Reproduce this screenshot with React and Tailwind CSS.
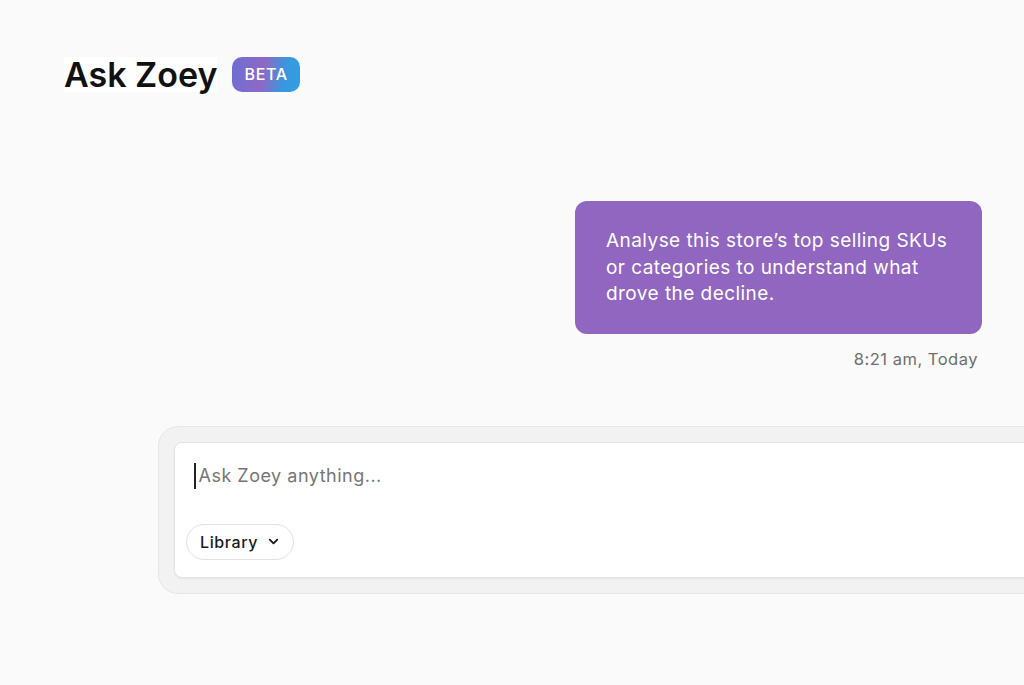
import React from 'react';

export default function App() {
    return (
        <div className="min-h-[685px] w-[1024px] overflow-hidden bg-[#fafafa] font-['Inter',sans-serif]">
            {/* Header */}
            <div className="flex items-center gap-[15px] pl-[64px] pt-[57px]">
                <h1 className="bg-white text-[34px] leading-[35px] font-semibold text-[#111]">Ask Zoey</h1>
                <span className="rounded-[10px] bg-[linear-gradient(100deg,#6c6fd2_0%,#8f68c6_45%,#3a97dd_75%,#2ea0e2_100%)] px-[12px] py-[7px] text-[16px] leading-[21px] font-medium tracking-[0.7px] text-white">
                    BETA
                </span>
            </div>

            {/* Mensaje del usuario */}
            <div className="mt-[109px] flex flex-col items-end pr-[42px]">
                <div className="w-[407px] rounded-[12px] bg-[#9166c0] px-[31px] pt-[27px] pb-[26px] text-[19px] leading-[26.5px] tracking-[0.45px] text-white">
                    Analyse this store’s top selling SKUs or categories to understand what drove the decline.
                </div>
                <p className="mt-[14px] pr-[4px] text-[16.5px] leading-[22px] tracking-[0.5px] text-[#6f6f6f]">8:21 am, Today</p>
            </div>

            {/* Caja de entrada */}
            <div className="mt-[56px] ml-[158px] w-[900px] rounded-[20px] border border-[#e6e6e6] bg-[#f2f2f2] p-[15px]">
                <div className="h-[136px] rounded-[8px] border border-[#e3e3e3] bg-white px-[11px] pt-[20px] shadow-[0_1px_2px_rgba(0,0,0,0.05)]">
                    <div className="flex items-center pl-[8px]">
                        <span className="h-[26px] w-[1.5px] bg-[#222]" />
                        <span className="pl-[3px] text-[18px] leading-[26px] tracking-[0.5px] text-[#767676]">Ask Zoey anything...</span>
                    </div>
                    <button className="mt-[35px] flex h-[36px] items-center gap-[8px] rounded-full border border-[#e2e2e2] bg-white pl-[13px] pr-[12px] text-[16px] font-medium tracking-[0.6px] text-[#1a1a1a]">
                        Library
                        <svg width="15" height="15" viewBox="0 0 24 24" fill="none" stroke="currentColor" strokeWidth="3" strokeLinecap="round" strokeLinejoin="round">
                            <path d="M6 9l6 6 6-6" />
                        </svg>
                    </button>
                </div>
            </div>
        </div>
    );
}
